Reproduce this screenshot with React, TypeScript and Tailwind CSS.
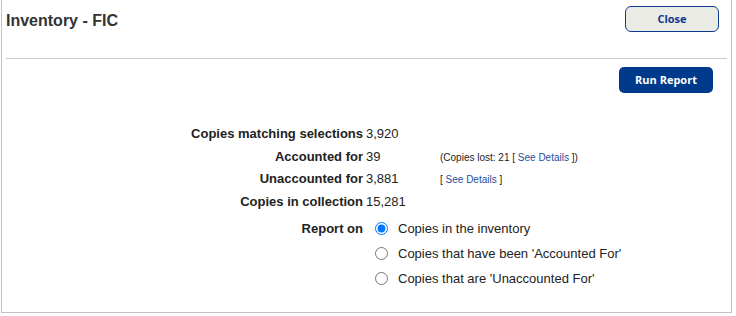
import React, { useState } from 'react';

const stats = [
  { label: 'Copies matching selections', value: '3,920', note: null },
  { label: 'Accounted for', value: '39', note: 'lost' },
  { label: 'Unaccounted for', value: '3,881', note: 'details' },
  { label: 'Copies in collection', value: '15,281', note: null },
];

const reportOptions = [
  { id: 'inventory', label: 'Copies in the inventory' },
  { id: 'accounted', label: "Copies that have been 'Accounted For'" },
  { id: 'unaccounted', label: "Copies that are 'Unaccounted For'" },
];

const SeeDetails: React.FC = () => (
  <span>
    [ <a href="#" className="text-[#1c4f9c]">See Details</a> ]
  </span>
);

export default function App() {
  const [reportOn, setReportOn] = useState('inventory');

  return (
    <div className="h-[316px] w-[736px] bg-white font-['Liberation_Sans',Arial,sans-serif] text-[#222]">
      <div className="ml-[1px] flex h-[313px] w-[731px] flex-col border-x border-b border-[#c3c3c3]">
        {/* header */}
        <div className="flex h-[58px] items-start justify-between">
          <h1 className="ml-[4px] mt-[12px] text-[16px] font-bold leading-[18px] text-[#333]">
            Inventory - FIC
          </h1>
          <button className="mr-[12px] mt-[6px] h-[26px] w-[94px] rounded-[6px] border border-[#0b3a8f] bg-[#ebebe6] font-['Open_Sans',sans-serif] text-[11px] font-bold text-[#0b3a8f]">
            Close
          </button>
        </div>
        <div className="mx-[4px] h-px bg-[#cbcbcb]" />

        <div className="mt-[8px] flex justify-end">
          <button className="mr-[18px] h-[26px] w-[94px] rounded-[5px] bg-[#003a8c] font-['Open_Sans',sans-serif] text-[11px] font-bold text-white">
            Run Report
          </button>
        </div>

        {/* summary */}
        <div className="mt-[30px] text-[13px]">
          {stats.map(s => (
            <div key={s.label} className="flex h-[22.5px] items-baseline leading-[22.5px]">
              <div className="w-[361px] text-right font-bold">{s.label}</div>
              <div className="ml-[3px] w-[74px]">{s.value}</div>
              {s.note === 'lost' && (
                <div className="text-[10px]">
                  (Copies lost: 21 <SeeDetails />)
                </div>
              )}
              {s.note === 'details' && (
                <div className="text-[10px]">
                  <SeeDetails />
                </div>
              )}
            </div>
          ))}

          <div className="mt-[2.5px] flex">
            <div className="h-[25px] w-[361px] text-right font-bold leading-[25px]">Report on</div>
            <div className="ml-[3px] flex flex-col">
              {reportOptions.map(opt => (
                <label key={opt.id} className="flex h-[25px] items-center">
                  <input
                    type="radio"
                    name="reportOn"
                    className="ml-[9px] h-[13px] w-[13px]"
                    checked={reportOn === opt.id}
                    onChange={() => setReportOn(opt.id)}
                  />
                  <span className="ml-[10px] leading-[25px]">{opt.label}</span>
                </label>
              ))}
            </div>
          </div>
        </div>
      </div>
    </div>
  );
}
